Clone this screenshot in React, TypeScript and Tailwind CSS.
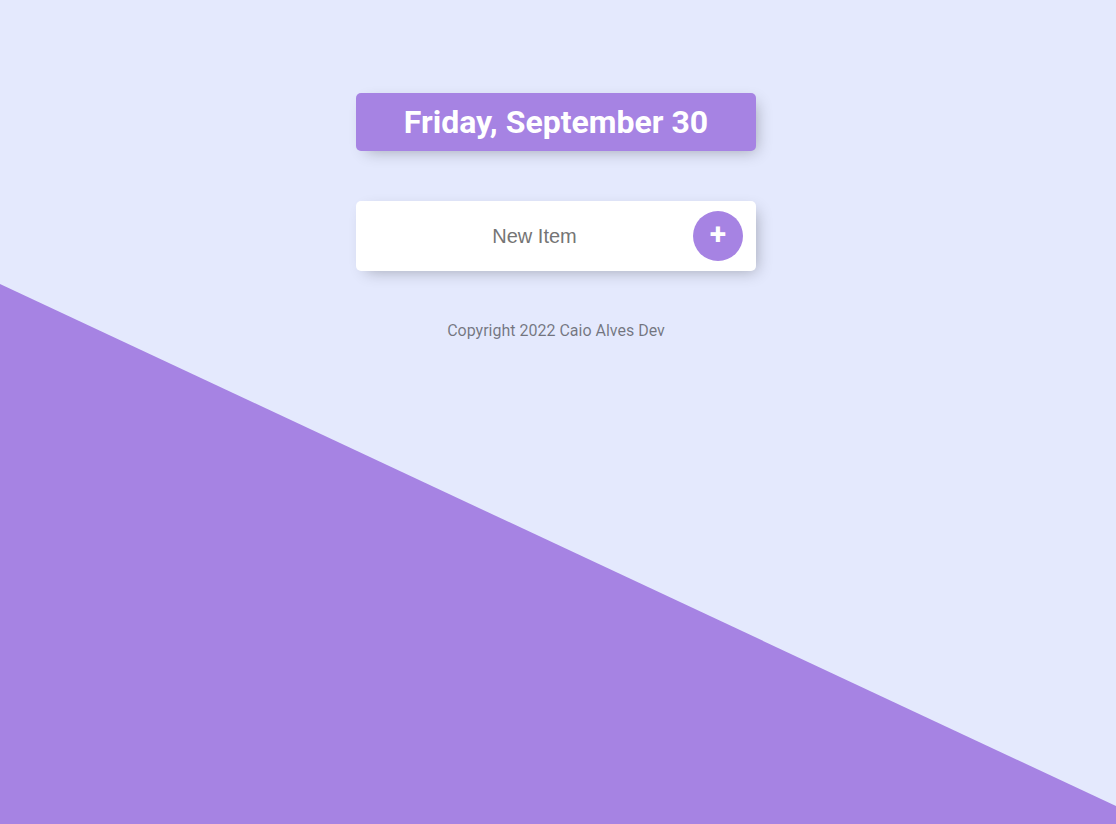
export default function App() {
  return (
    <div className="relative min-h-[824px] overflow-hidden bg-[#e4e9fd] font-['Roboto',sans-serif]">
      {/* diagonal purple backdrop */}
      <div className="absolute inset-0 bg-[#a683e3] [clip-path:polygon(0_284px,100%_806px,100%_100%,0_100%)]" />

      <div className="relative flex flex-col items-center pt-[93px] pr-[4px]">
        <div className="w-[400px] rounded-[5px] bg-[#a683e3] px-[10px] py-[10px] text-center shadow-[5px_5px_15px_-5px_rgba(0,0,0,0.3)]">
          <h1 className="text-[32px] font-bold leading-[38px] text-white">Friday, September 30</h1>
        </div>

        <form
          className="mt-[50px] flex h-[70px] w-[400px] items-center rounded-[5px] bg-white pl-[20px] pr-[13px] shadow-[5px_5px_15px_-5px_rgba(0,0,0,0.3)]"
          onSubmit={(e) => e.preventDefault()}
        >
          <input
            type="text"
            placeholder="New Item"
            className="h-[60px] min-w-0 flex-1 bg-transparent text-center font-['Liberation_Sans',sans-serif] text-[20px] text-gray-800 outline-none placeholder:text-[#757575]"
          />
          <button
            type="submit"
            className="flex h-[50px] w-[50px] shrink-0 items-center justify-center rounded-full bg-[#a683e3] pb-[4px] text-[30px] font-bold leading-none text-white"
          >
            +
          </button>
        </form>

        <footer className="mt-[48px] text-center text-[16px] text-black/50">Copyright 2022 Caio Alves Dev</footer>
      </div>
    </div>
  );
}
